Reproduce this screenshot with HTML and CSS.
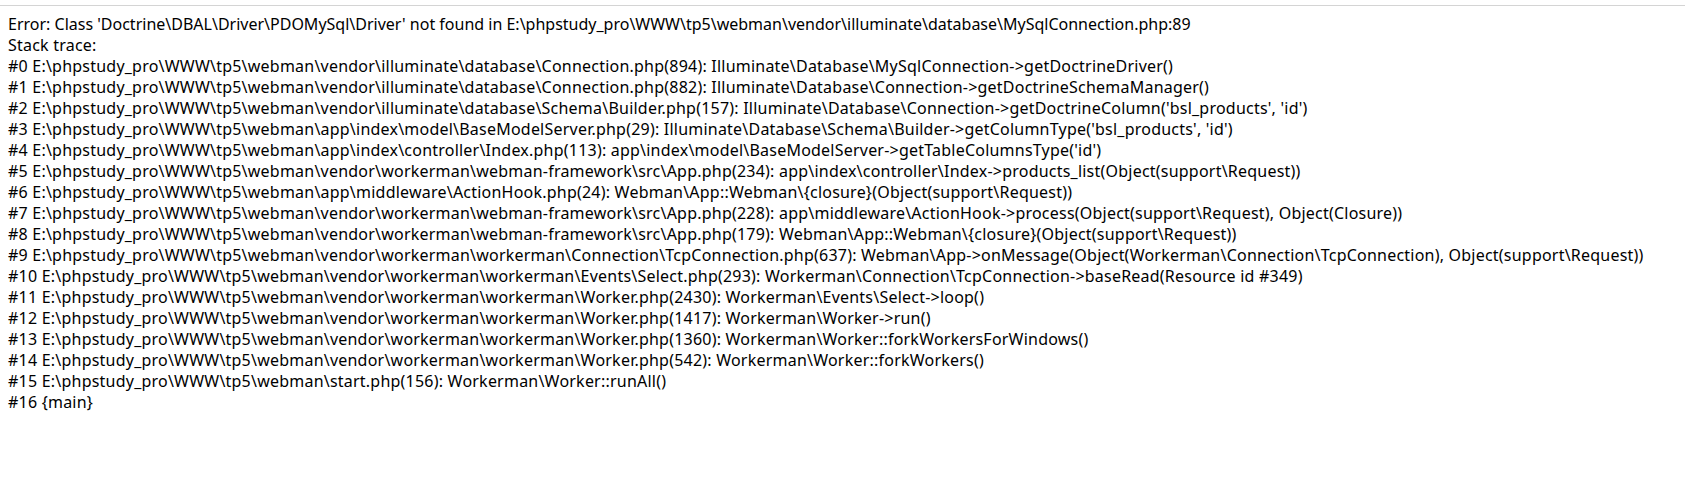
FILE: index.html
```html
<!DOCTYPE html>
<html>
<head>
<meta charset="utf-8">
<link rel="stylesheet" href="styles.css">
</head>
<body>
<div class="rule"></div>
<div class="output">
<div class="message">Error: Class 'Doctrine\DBAL\Driver\PDOMySql\Driver' not found in E:\phpstudy_pro\WWW\tp5\webman\vendor\illuminate\database\MySqlConnection.php:89</div>
<div class="trace">Stack trace:
#0 E:\phpstudy_pro\WWW\tp5\webman\vendor\illuminate\database\Connection.php(894): Illuminate\Database\MySqlConnection-&gt;getDoctrineDriver()
#1 E:\phpstudy_pro\WWW\tp5\webman\vendor\illuminate\database\Connection.php(882): Illuminate\Database\Connection-&gt;getDoctrineSchemaManager()
#2 E:\phpstudy_pro\WWW\tp5\webman\vendor\illuminate\database\Schema\Builder.php(157): Illuminate\Database\Connection-&gt;getDoctrineColumn('bsl_products', 'id')
#3 E:\phpstudy_pro\WWW\tp5\webman\app\index\model\BaseModelServer.php(29): Illuminate\Database\Schema\Builder-&gt;getColumnType('bsl_products', 'id')
#4 E:\phpstudy_pro\WWW\tp5\webman\app\index\controller\Index.php(113): app\index\model\BaseModelServer-&gt;getTableColumnsType('id')
#5 E:\phpstudy_pro\WWW\tp5\webman\vendor\workerman\webman-framework\src\App.php(234): app\index\controller\Index-&gt;products_list(Object(support\Request))
#6 E:\phpstudy_pro\WWW\tp5\webman\app\middleware\ActionHook.php(24): Webman\App::Webman\{closure}(Object(support\Request))
#7 E:\phpstudy_pro\WWW\tp5\webman\vendor\workerman\webman-framework\src\App.php(228): app\middleware\ActionHook-&gt;process(Object(support\Request), Object(Closure))
#8 E:\phpstudy_pro\WWW\tp5\webman\vendor\workerman\webman-framework\src\App.php(179): Webman\App::Webman\{closure}(Object(support\Request))
#9 E:\phpstudy_pro\WWW\tp5\webman\vendor\workerman\workerman\Connection\TcpConnection.php(637): Webman\App-&gt;onMessage(Object(Workerman\Connection\TcpConnection), Object(support\Request))
#10 E:\phpstudy_pro\WWW\tp5\webman\vendor\workerman\workerman\Events\Select.php(293): Workerman\Connection\TcpConnection-&gt;baseRead(Resource id #349)
#11 E:\phpstudy_pro\WWW\tp5\webman\vendor\workerman\workerman\Worker.php(2430): Workerman\Events\Select-&gt;loop()
#12 E:\phpstudy_pro\WWW\tp5\webman\vendor\workerman\workerman\Worker.php(1417): Workerman\Worker-&gt;run()
#13 E:\phpstudy_pro\WWW\tp5\webman\vendor\workerman\workerman\Worker.php(1360): Workerman\Worker::forkWorkersForWindows()
#14 E:\phpstudy_pro\WWW\tp5\webman\vendor\workerman\workerman\Worker.php(542): Workerman\Worker::forkWorkers()
#15 E:\phpstudy_pro\WWW\tp5\webman\start.php(156): Workerman\Worker::runAll()
#16 {main}</div>
</div>
</body>
</html>
```
FILE: styles.css
```css
html, body {
  margin: 0;
  padding: 0;
  background: #ffffff;
}
.rule {
  margin-top: 5px;
  height: 0;
  border-top: 1px solid #d4d4d4;
}
.output {
  margin: 8px 0 0 8px;
  font-family: "Noto Sans", "Open Sans", sans-serif;
  font-size: 16px;
  line-height: 21px;
  color: #000000;
}
.message {
  white-space: pre;
  letter-spacing: 0;
}
.trace {
  white-space: pre;
  letter-spacing: 0.22px;
}
```
